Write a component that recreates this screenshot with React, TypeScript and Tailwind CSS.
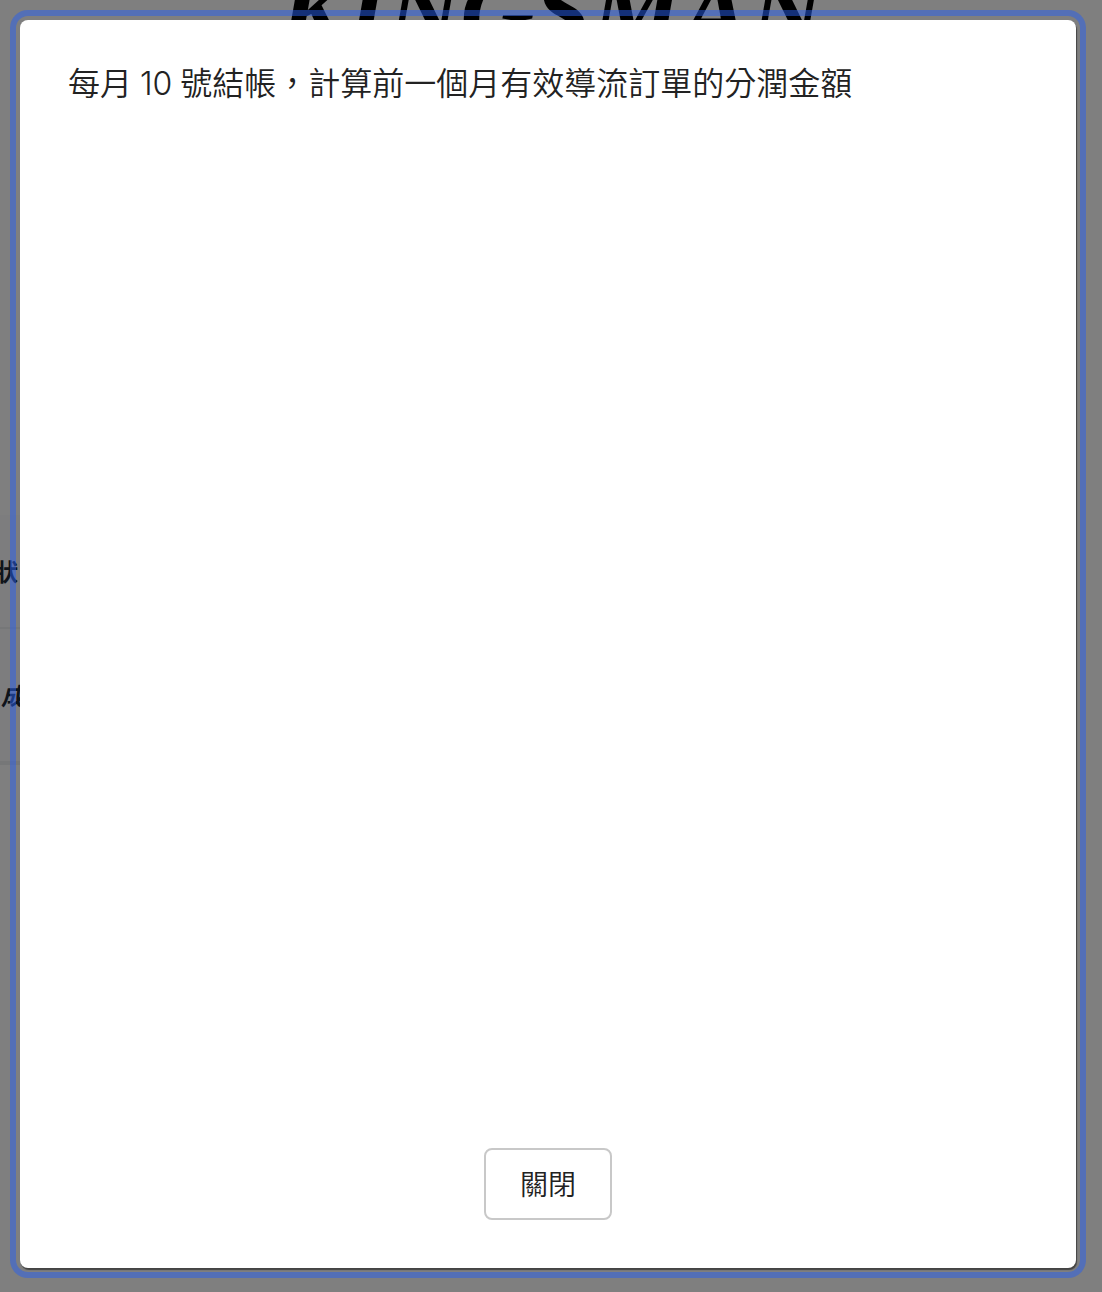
export default function App() {
  return (
    <div className="relative h-[1292px] w-[1102px] overflow-hidden bg-white font-['Liberation_Sans',sans-serif]">
      {/* page behind the dialog */}
      <div className="flex h-full flex-col">
        <div className="-mt-[38px] flex h-[100px] justify-center font-['Liberation_Serif',serif] text-[102px] leading-[100px] font-bold text-black italic">
          KINGSMAN
        </div>
        <div className="mt-[453px] flex h-[114px] w-[1060px] items-center border-b-2 border-[#eceef1] bg-[#fbfbfc] text-[24px] font-bold text-[#1f2937]">
          <span className="-ml-[6px] font-['Noto_Sans_CJK_TC',sans-serif]">狀</span>
        </div>
        <div className="flex h-[136px] w-[1060px] items-center border-b-4 border-[#eceef1] bg-[#fbfbfc] text-[24px] font-bold text-[#1f2937] italic">
          <span className="ml-[1px] font-['Noto_Sans_CJK_TC',sans-serif]">成</span>
        </div>
      </div>

      {/* overlay */}
      <div className="absolute inset-0 flex bg-black/50 pt-[20px] pr-[26px] pb-[24px] pl-[20px]">
        <div className="flex w-full flex-col items-start rounded-[8px] bg-white p-12 shadow-[1px_2px_1px_#444444] outline-[6px] outline-offset-[4px] outline-[#2860f0]/50 outline-solid">
          <p className="flex-1 font-['Inter','Noto_Sans_CJK_TC',sans-serif] text-[32px] leading-[32px] font-[350] whitespace-pre text-[#222222] [word-spacing:-1px]">
            每月 10 號結帳，計算前一個月有效導流訂單的分潤金額
          </p>
          <button className="mx-auto h-[72px] w-[128px] rounded-[8px] border-2 border-[#c8c8c8] bg-white pb-[2px] font-['Noto_Sans_CJK_TC',sans-serif] text-[28px] font-[350] text-[#222222]">
            關閉
          </button>
        </div>
      </div>
    </div>
  );
}
